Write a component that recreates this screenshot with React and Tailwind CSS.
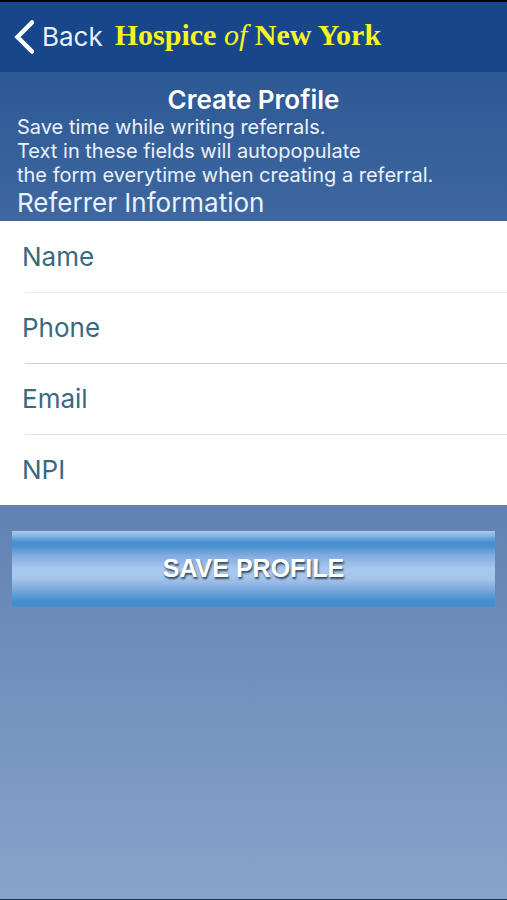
const FIELDS = [
  { id: "name", label: "Name", type: "text" },
  { id: "phone", label: "Phone", type: "tel", divider: "border-[#ebedee]" },
  { id: "email", label: "Email", type: "email", divider: "border-[#cfd1d2]" },
  { id: "npi", label: "NPI", type: "text", divider: "border-[#e4e6e8]" },
];

function Header() {
  return (
    <header className="flex h-[72px] items-center border-t-2 border-b border-t-black border-b-[#1c4a80] bg-[#17468b] px-3">
      <a href="#back" className="flex shrink-0 items-center gap-2 text-[26px] leading-8 text-[#e8f0ff]">
        <svg width="22" height="34" viewBox="0 0 22 34" fill="none" aria-hidden="true">
          <path d="M20 2.5 L5.5 17 L20 31.5" stroke="#fff" strokeWidth="4.5" strokeLinecap="round" />
        </svg>
        Back
      </a>
      <p className="ml-3 pb-1 font-['Palatino','Liberation_Serif',serif] text-[30px] leading-8 font-bold whitespace-nowrap text-[#f6f51e]">
        Hospice <em className="font-normal">of</em> New York
      </p>
    </header>
  );
}

function Field({ id, label, type, divider }) {
  return (
    <>
      {divider && <hr className={`ml-[25px] ${divider}`} />}
      <div className={`flex items-center pl-[22px] ${divider ? "h-[70px]" : "h-[71px]"}`}>
        <label htmlFor={id} className="text-[26px] leading-8 text-[#39697f]">
          {label}
        </label>
        <input
          id={id}
          name={id}
          type={type}
          className="ml-3 h-full min-w-0 flex-1 bg-transparent text-[26px] text-[#39697f] outline-none"
        />
      </div>
    </>
  );
}

export default function App() {
  return (
    <div className="flex min-h-screen flex-col border-b border-[#1d3a50] bg-[#2c5995] font-['Inter',sans-serif]">
      <Header />
      <main className="flex-1 bg-linear-to-b from-[#2c5995] via-[#5f80b2] to-[#89a3cb]">
        <section className="px-[17px] pt-[13px] text-[#eaf2ff]">
          <h1 className="text-center text-[26px] leading-[30px] font-semibold text-white">Create Profile</h1>
          <p className="text-[20px] leading-6">
            Save time while writing referrals.
            <br />
            Text in these fields will autopopulate
            <br />
            the form everytime when creating a referral.
          </p>
          <h2 className="pb-0.5 text-[26px] leading-8">Referrer Information</h2>
        </section>

        <form onSubmit={(e) => e.preventDefault()}>
          <div className="bg-white">
            {FIELDS.map((field) => (
              <Field key={field.id} {...field} />
            ))}
          </div>
          <div className="px-3 pt-[26px]">
            <button
              type="submit"
              className="h-[76px] w-full bg-[linear-gradient(to_bottom,#a9caee_0%,#8fb9e6_5%,#478fce_15%,#478fce_19%,#84ace0_33%,#a9c8ee_50%,#a6c5eb_62%,#7fabdf_76%,#438ecf_92%,#438ecf_100%)] font-['Liberation_Sans',sans-serif] text-[25px] font-bold text-white [text-shadow:1px_2px_2px_#34495f]"
            >
              SAVE PROFILE
            </button>
          </div>
        </form>
      </main>
    </div>
  );
}
